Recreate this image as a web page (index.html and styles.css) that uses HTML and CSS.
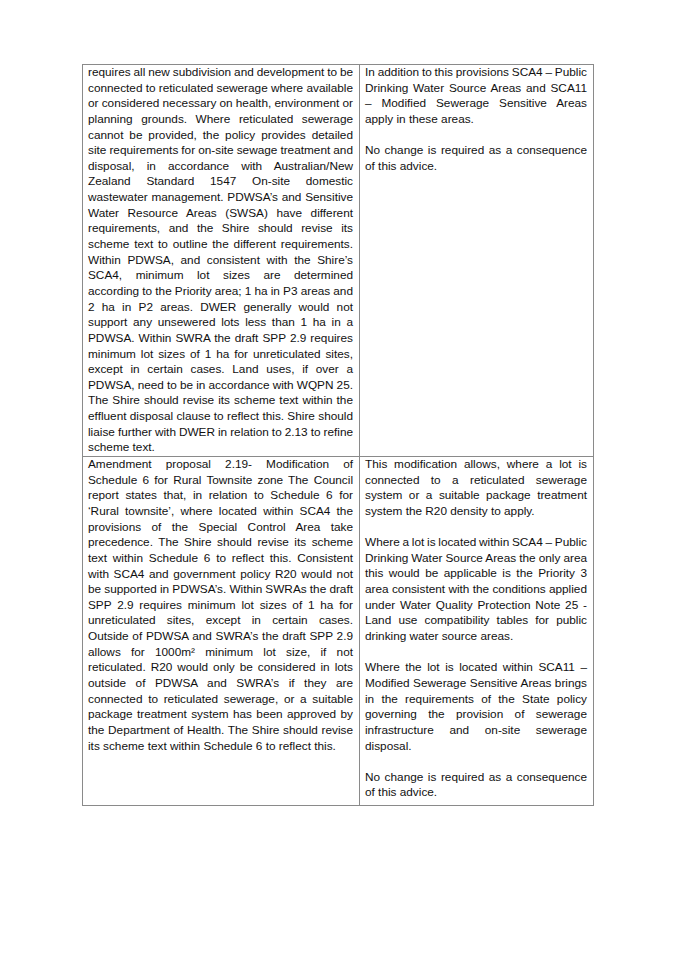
FILE: index.html
```html
<!DOCTYPE html>
<html lang="en">
<head>
<meta charset="utf-8">
<title>Submission response table</title>
<link rel="stylesheet" href="styles.css">
</head>
<body>
<div class="page">
  <div class="table">
    <div class="cell">
      <p class="para">
        <span class="ln">requires all new subdivision and development to be</span>
        <span class="ln">connected to reticulated sewerage where available</span>
        <span class="ln">or considered necessary on health, environment or</span>
        <span class="ln">planning grounds. Where reticulated sewerage</span>
        <span class="ln">cannot be provided, the policy provides detailed</span>
        <span class="ln">site requirements for on-site sewage treatment and</span>
        <span class="ln">disposal, in accordance with Australian/New</span>
        <span class="ln">Zealand Standard 1547 On-site domestic</span>
        <span class="ln">wastewater management. PDWSA’s and Sensitive</span>
        <span class="ln">Water Resource Areas (SWSA) have different</span>
        <span class="ln">requirements, and the Shire should revise its</span>
        <span class="ln">scheme text to outline the different requirements.</span>
        <span class="ln">Within PDWSA, and consistent with the Shire’s</span>
        <span class="ln">SCA4, minimum lot sizes are determined</span>
        <span class="ln">according to the Priority area; 1 ha in P3 areas and</span>
        <span class="ln">2 ha in P2 areas. DWER generally would not</span>
        <span class="ln">support any unsewered lots less than 1 ha in a</span>
        <span class="ln">PDWSA. Within SWRA the draft SPP 2.9 requires</span>
        <span class="ln">minimum lot sizes of 1 ha for unreticulated sites,</span>
        <span class="ln">except in certain cases. Land uses, if over a</span>
        <span class="ln">PDWSA, need to be in accordance with WQPN 25.</span>
        <span class="ln">The Shire should revise its scheme text within the</span>
        <span class="ln">effluent disposal clause to reflect this. Shire should</span>
        <span class="ln">liaise further with DWER in relation to 2.13 to refine</span>
        <span class="ln end">scheme text.</span>
      </p>
    </div>
    <div class="cell">
      <p class="para">
        <span class="ln">In addition to this provisions SCA4 – Public</span>
        <span class="ln">Drinking Water Source Areas and SCA11</span>
        <span class="ln">– Modified Sewerage Sensitive Areas</span>
        <span class="ln end">apply in these areas.</span>
      </p>
      <p class="para">
        <span class="ln">No change is required as a consequence</span>
        <span class="ln end">of this advice.</span>
      </p>
    </div>
    <div class="cell last-row">
      <p class="para">
        <span class="ln">Amendment proposal 2.19- Modification of</span>
        <span class="ln">Schedule 6 for Rural Townsite zone The Council</span>
        <span class="ln">report states that, in relation to Schedule 6 for</span>
        <span class="ln">‘Rural townsite’, where located within SCA4 the</span>
        <span class="ln">provisions of the Special Control Area take</span>
        <span class="ln">precedence. The Shire should revise its scheme</span>
        <span class="ln">text within Schedule 6 to reflect this. Consistent</span>
        <span class="ln">with SCA4 and government policy R20 would not</span>
        <span class="ln">be supported in PDWSA’s. Within SWRAs the draft</span>
        <span class="ln">SPP 2.9 requires minimum lot sizes of 1 ha for</span>
        <span class="ln">unreticulated sites, except in certain cases.</span>
        <span class="ln">Outside of PDWSA and SWRA’s the draft SPP 2.9</span>
        <span class="ln">allows for 1000m² minimum lot size, if not</span>
        <span class="ln">reticulated. R20 would only be considered in lots</span>
        <span class="ln">outside of PDWSA and SWRA’s if they are</span>
        <span class="ln">connected to reticulated sewerage, or a suitable</span>
        <span class="ln">package treatment system has been approved by</span>
        <span class="ln">the Department of Health. The Shire should revise</span>
        <span class="ln end">its scheme text within Schedule 6 to reflect this.</span>
      </p>
    </div>
    <div class="cell last-row">
      <p class="para">
        <span class="ln">This modification allows, where a lot is</span>
        <span class="ln">connected to a reticulated sewerage</span>
        <span class="ln">system or a suitable package treatment</span>
        <span class="ln end">system the R20 density to apply.</span>
      </p>
      <p class="para">
        <span class="ln">Where a lot is located within SCA4 – Public</span>
        <span class="ln">Drinking Water Source Areas the only area</span>
        <span class="ln">this would be applicable is the Priority 3</span>
        <span class="ln">area consistent with the conditions applied</span>
        <span class="ln">under Water Quality Protection Note 25 -</span>
        <span class="ln">Land use compatibility tables for public</span>
        <span class="ln end">drinking water source areas.</span>
      </p>
      <p class="para">
        <span class="ln">Where the lot is located within SCA11 –</span>
        <span class="ln">Modified Sewerage Sensitive Areas brings</span>
        <span class="ln">in the requirements of the State policy</span>
        <span class="ln">governing the provision of sewerage</span>
        <span class="ln">infrastructure and on-site sewerage</span>
        <span class="ln end">disposal.</span>
      </p>
      <p class="para">
        <span class="ln">No change is required as a consequence</span>
        <span class="ln end">of this advice.</span>
      </p>
    </div>
  </div>
</div>
</body>
</html>
```

FILE: styles.css
```css
html, body {
  margin: 0;
  padding: 0;
  background: #ffffff;
}

.page {
  padding: 64px 0 0 82px;
  font-family: "Liberation Sans", Arial, sans-serif;
  font-size: 11.8px;
  line-height: 15.64px;
  color: #111111;
}

.table {
  display: grid;
  grid-template-columns: 277px 234px;
  width: 512px;
  border-left: 1px solid #8a8a8a;
  border-top: 1px solid #8a8a8a;
  box-sizing: border-box;
}

.cell {
  border-right: 1px solid #8a8a8a;
  border-bottom: 1px solid #8a8a8a;
  padding: 0 6px 0 5px;
}

.cell.last-row {
  padding-bottom: 4px;
}

.para {
  margin: 0;
}

.para + .para {
  margin-top: 15.64px;
}

.ln {
  display: block;
  text-align: justify;
  text-align-last: justify;
  word-spacing: -2px;
}

.ln.end {
  text-align-last: left;
  word-spacing: normal;
}
```
